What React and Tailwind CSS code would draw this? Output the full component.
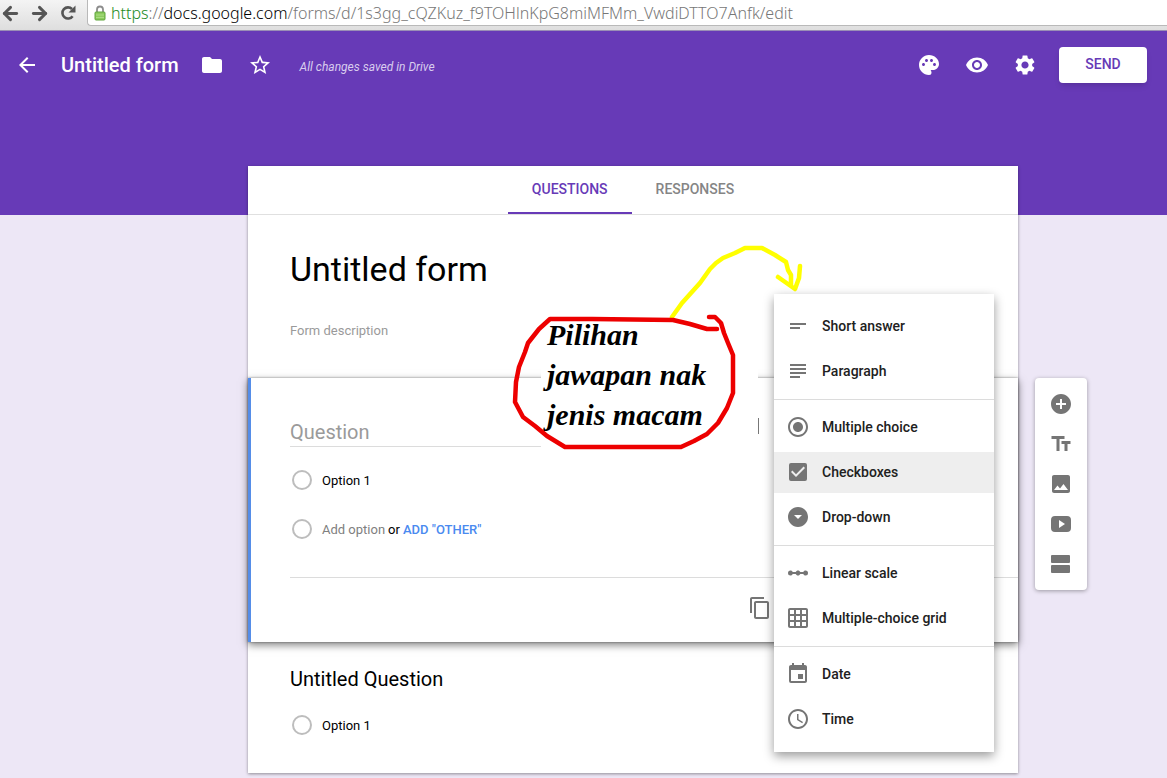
import React, { useState } from 'react'
import { ArrowLeft, ArrowRight } from 'lucide-react'
import {
    MdAccessTime, MdAddCircle, MdArrowBack, MdArrowDropDownCircle, MdCheckBox, MdContentCopy,
    MdEvent, MdFolder, MdGridOn, MdImage, MdLinearScale, MdPalette, MdRadioButtonChecked,
    MdSettings, MdShortText, MdStarBorder, MdSubject, MdTextFields, MdVisibility
} from 'react-icons/md'

const typeGroups = [
    [
        { label: 'Short answer', Icon: MdShortText },
        { label: 'Paragraph', Icon: MdSubject }
    ],
    [
        { label: 'Multiple choice', Icon: MdRadioButtonChecked },
        { label: 'Checkboxes', Icon: MdCheckBox },
        { label: 'Drop-down', Icon: MdArrowDropDownCircle }
    ],
    [
        { label: 'Linear scale', Icon: MdLinearScale },
        { label: 'Multiple-choice grid', Icon: MdGridOn }
    ],
    [
        { label: 'Date', Icon: MdEvent },
        { label: 'Time', Icon: MdAccessTime }
    ]
]

function VideoIcon() {
    return <svg width="24" height="24" viewBox="0 0 24 24" fill="currentColor">
        <path fillRule="evenodd" d="M6 4h12q4 0 4 4v8q0 4-4 4H6q-4 0-4-4V8q0-4 4-4zM10 8v8l6-4z" />
    </svg>
}

function SectionIcon() {
    return <svg width="24" height="24" viewBox="0 0 24 24" fill="currentColor">
        <rect x="2" y="3" width="19" height="8" rx="1" />
        <rect x="2" y="13" width="19" height="8" rx="1" />
    </svg>
}

const tools = [
    { label: 'Add question', Icon: MdAddCircle },
    { label: 'Add title and description', Icon: MdTextFields },
    { label: 'Add image', Icon: MdImage },
    { label: 'Add video', Icon: VideoIcon },
    { label: 'Add section', Icon: SectionIcon }
]

function LockIcon() {
    return <svg className="ml-1 shrink-0" width="14" height="18" viewBox="0 0 14 18">
        <path d="M4 9V5.5a3 3 0 0 1 6 0V9" fill="none" stroke="#8d8d8d" strokeWidth="1.8" />
        <rect x="2" y="8" width="10" height="8" rx="1" fill="#8ccb5e" stroke="#5fa53c" />
        <path d="M3 11h8M3 13.5h8" stroke="#a9dc83" />
    </svg>
}

function ReloadIcon() {
    return <svg width="16" height="16" viewBox="0 0 16 16">
        <path d="M12.6 11.2A5.6 5.6 0 1 1 12 4" fill="none" stroke="currentColor" strokeWidth="2.6" />
        <path d="M15.5 0.5V7.5H8.5z" fill="currentColor" />
    </svg>
}

function BrowserBar() {
    return <div className="flex items-start h-[31px] overflow-hidden border-b border-[#9a8fb5] bg-linear-to-b from-[#f4f4f4] to-[#dedede] text-[#555]">
        <div className="flex items-center h-[26px] w-[87px] gap-2 shrink-0">
            <button aria-label="Back"><ArrowLeft size={21} strokeWidth={3.4} /></button>
            <button aria-label="Forward"><ArrowRight size={21} strokeWidth={3.4} /></button>
            <button aria-label="Reload" className="pl-0.5"><ReloadIcon /></button>
        </div>
        <div className="flex flex-1 items-center h-[26px] gap-1 pl-px bg-white border-l border-b border-[#b9b9b9] rounded-bl whitespace-nowrap">
            <LockIcon />
            <span className="font-['Noto_Sans',sans-serif] font-light text-base leading-5 text-[#777]">
                <span className="text-[#1b8a1b]">https</span>://<span className="text-black">docs.google.com</span>/forms/d/1s3gg_cQZKuz_f9TOHlnKpG8miMFMm_VwdiDTTO7Anfk/edit
            </span>
        </div>
    </div>
}

function Header() {
    return <header className="h-46 bg-[#673ab7] text-white">
        <div className="flex items-center h-17 pl-[15px] pr-5">
            <button aria-label="Back to forms"><MdArrowBack size={24} /></button>
            <h1 className="ml-[22px] text-xl font-medium">Untitled form</h1>
            <button aria-label="Move to folder" className="ml-[21px]"><MdFolder size={24} /></button>
            <button aria-label="Star" className="ml-6"><MdStarBorder size={24} /></button>
            <span className="ml-7 pt-1 text-xs italic text-[#d9cdee]">All changes saved in Drive</span>
            <div className="flex items-center gap-6 ml-auto">
                <button aria-label="Colour palette"><MdPalette size={24} /></button>
                <button aria-label="Preview"><MdVisibility size={24} /></button>
                <button aria-label="Settings"><MdSettings size={24} /></button>
            </div>
            <button className="ml-[22px] w-22 h-9 pb-0.5 rounded-sm bg-white text-sm font-medium text-[#673ab7] shadow-md">SEND</button>
        </div>
    </header>
}

function Tabs() {
    const [tab, setTab] = useState('QUESTIONS')

    return <div className="flex justify-center h-[49px] border-b border-[#e0e0e0]">
        {['QUESTIONS', 'RESPONSES'].map(name => (
            <button
                key={name}
                onClick={() => setTab(name)}
                className={`px-6 h-12 border-b-2 text-sm font-medium ${tab === name ? 'text-[#673ab7] border-[#673ab7]' : 'text-[#858585] border-transparent'}`}
            >{name}</button>
        ))}
    </div>
}

function OptionRadio({ label }) {
    return <input type="radio" disabled aria-label={label} className="appearance-none size-5 shrink-0 rounded-full border-2 border-[#bdbdbd]" />
}

function TypeMenu() {
    const [selected, setSelected] = useState('Checkboxes')

    return <div className="absolute right-6 -top-21 w-55 py-3 bg-white shadow-[0_4px_10px_rgba(0,0,0,0.4)]">
        {typeGroups.map((group, i) => (
            <div key={i} className={`flex flex-col gap-1 ${i > 0 ? 'mt-[7px] pt-[7px] border-t border-[#dcdcdc]' : ''}`}>
                {group.map(({ label, Icon }) => (
                    <button
                        key={label}
                        onClick={() => setSelected(label)}
                        className={`flex items-center gap-3 h-[41px] px-3 pb-0.5 text-sm font-medium text-[#212121] ${selected === label ? 'bg-[#eeeeee]' : ''}`}
                    >
                        <Icon size={24} className="text-[#757575]" />
                        {label}
                    </button>
                ))}
            </div>
        ))}
    </div>
}

// hand-drawn note pointing at the answer types
function Note() {
    return <div className="absolute left-[257px] -top-[138px] w-[300px] h-[216px] pointer-events-none">
        <p className="absolute left-[33px] top-[75px] w-[217px] h-[135px] pl-1.5 bg-white font-['Liberation_Serif',serif] font-bold italic text-3xl leading-10 text-black">
            Pilihan<br />jawapan nak<br />jenis macam
        </p>
        <svg className="absolute inset-0" width="300" height="216" viewBox="508 240 300 216" fill="none" strokeWidth="4.5" strokeLinecap="round" strokeLinejoin="round">
            <path stroke="#ffff00" d="M672 317L682 303L691 293L700 283L710 269L716 263L723 258L735 253L745 248H762L775 255L786 262L788 270L791 275V285M778 277L795 289L799 278L800 266" />
            <path stroke="#ed0000" d="M709 317H715L721 323L724 333L728 343L733 355V393L727 408L718 423L707 434L694 441L681 447H565L547 436L535 426L523 417L515 402L516 382L519 367L525 352L528 343L539 329L550 319H592L673 320L690 324L707 329H717" />
            <path stroke="#777" strokeWidth="1" strokeLinecap="butt" d="M758.5 418V434" />
        </svg>
    </div>
}

function ActiveQuestion() {
    return <section className="relative border-l-3 border-[#558de8] pl-[39px] pt-10 bg-white shadow-[0_0_2px_rgba(0,0,0,0.4),0_3px_8px_rgba(0,0,0,0.5)]">
        <input aria-label="Question" placeholder="Question" className="block w-110 max-w-full h-[29px] border-b border-[#dcdcdc] text-xl outline-none placeholder:text-[#9a9a9a]" />
        <div className="flex items-center h-6 mt-[21px] pl-0.5 gap-2.5">
            <OptionRadio label="Option 1 marker" />
            <input aria-label="Option text" defaultValue="Option 1" className="w-40 pt-0.5 text-[13px] outline-none" />
        </div>
        <div className="flex items-center h-6 mt-[25px] pl-0.5 gap-2.5 text-[13px]">
            <OptionRadio label="New option marker" />
            <div className="flex gap-[3px] pt-0.5">
                <button className="text-[#808080]">Add option</button>
                <span>or</span>
                <button className="font-medium text-[#4a8af0]">ADD "OTHER"</button>
            </div>
        </div>
        <div className="flex items-center justify-end h-[65px] mt-9 pb-1 pr-[246px] border-t border-[#dcdcdc] text-[#757575]">
            <button aria-label="Duplicate"><MdContentCopy size={24} /></button>
        </div>
        <Note />
        <TypeMenu />
    </section>
}

function Toolbar() {
    return <div className="flex flex-col mt-53 py-1.5 w-13 shrink-0 rounded-sm bg-white text-[#757575] shadow-[0_1px_4px_rgba(0,0,0,0.35)]">
        {tools.map(({ label, Icon }) => (
            <button key={label} aria-label={label} className="flex items-center justify-center h-10"><Icon size={24} /></button>
        ))}
    </div>
}

export default function App() {
    return <div className="min-h-screen bg-[#ede7f6] font-[Roboto,sans-serif] text-black">
        <BrowserBar />
        <Header />
        <main className="flex items-start justify-center gap-[17px] -mt-[49px] pl-[168px] pb-1">
            <div className="flex-1 max-w-[770px] bg-white shadow-[0_1px_3px_rgba(0,0,0,0.4)]">
                <Tabs />
                <div className="px-[42px] pt-[34px] pb-[38px]">
                    <input aria-label="Form title" defaultValue="Untitled form" className="block w-full h-10 text-[34px] outline-none" />
                    <input aria-label="Form description" placeholder="Form description" className="block w-full h-5 mt-[31px] text-[13px] outline-none placeholder:text-[#9a9a9a]" />
                </div>
                <ActiveQuestion />
                <section className="px-[42px] pt-[23px] pb-9">
                    <h2 className="text-xl leading-7">Untitled Question</h2>
                    <label className="flex items-center h-6 mt-5 pl-0.5 gap-2.5 text-[13px]">
                        <OptionRadio label="Option 1" />
                        <span className="pt-0.5">Option 1</span>
                    </label>
                </section>
            </div>
            <Toolbar />
        </main>
    </div>
}
